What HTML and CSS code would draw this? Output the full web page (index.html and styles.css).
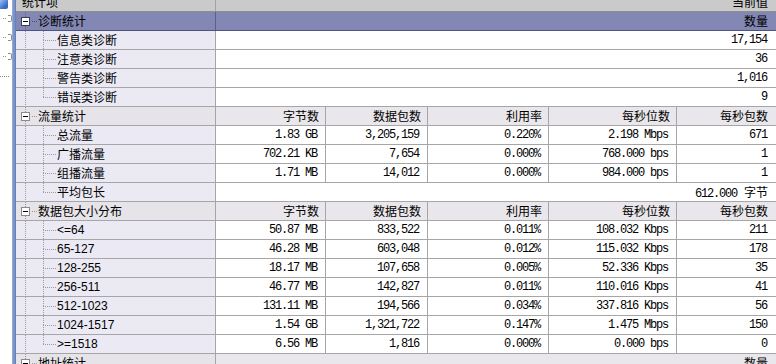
FILE: index.html
```html
<!DOCTYPE html>
<html lang="zh-CN">
<head>
<meta charset="utf-8">
<title>统计</title>
<link rel="stylesheet" href="styles.css">
</head>
<body>
<div class="app">
  <div class="side">
    <div class="side-icon"></div>
    <div class="side-node"><i class="dots"></i><b class="nub"></b></div>
    <div class="side-node"><i class="dots"></i><b class="nub"></b></div>
    <div class="side-node"><i class="dots"></i><b class="nub"></b></div>
    <div class="side-node"><i class="dots long"></i></div>
  </div>
  <div class="splitter"></div>
  <div class="grid">
    <div class="row head">
      <div class="c name"><span class="cut">统计项</span></div>
      <div class="c span"><span class="cut">当前值</span></div>
    </div>

    <div class="row group sel">
      <div class="c name"><b class="box"></b><i class="hz"></i><span class="lbl">诊断统计</span></div>
      <div class="c span">数量</div>
    </div>
    <div class="row child">
      <div class="c name"><span class="conn"><i class="up"></i><i class="h"></i><i class="dn"></i></span><span class="lbl">信息类诊断</span></div>
      <div class="c span num">17,154</div>
    </div>
    <div class="row child">
      <div class="c name"><span class="conn"><i class="up"></i><i class="h"></i><i class="dn"></i></span><span class="lbl">注意类诊断</span></div>
      <div class="c span num">36</div>
    </div>
    <div class="row child">
      <div class="c name"><span class="conn"><i class="up"></i><i class="h"></i><i class="dn"></i></span><span class="lbl">警告类诊断</span></div>
      <div class="c span num">1,016</div>
    </div>
    <div class="row child">
      <div class="c name"><span class="conn"><i class="up"></i><i class="h"></i><i class="dn end"></i></span><span class="lbl">错误类诊断</span></div>
      <div class="c span num">9</div>
    </div>

    <div class="row group">
      <div class="c name"><b class="box"></b><i class="hz"></i><span class="lbl">流量统计</span></div>
      <div class="c">字节数</div>
      <div class="c">数据包数</div>
      <div class="c">利用率</div>
      <div class="c">每秒位数</div>
      <div class="c">每秒包数</div>
    </div>
    <div class="row child">
      <div class="c name"><span class="conn"><i class="up"></i><i class="h"></i><i class="dn"></i></span><span class="lbl">总流量</span></div>
      <div class="c num">1.83 GB</div>
      <div class="c num">3,205,159</div>
      <div class="c num">0.220%</div>
      <div class="c num">2.198 Mbps</div>
      <div class="c num">671</div>
    </div>
    <div class="row child">
      <div class="c name"><span class="conn"><i class="up"></i><i class="h"></i><i class="dn"></i></span><span class="lbl">广播流量</span></div>
      <div class="c num">702.21 KB</div>
      <div class="c num">7,654</div>
      <div class="c num">0.000%</div>
      <div class="c num">768.000 bps</div>
      <div class="c num">1</div>
    </div>
    <div class="row child">
      <div class="c name"><span class="conn"><i class="up"></i><i class="h"></i><i class="dn"></i></span><span class="lbl">组播流量</span></div>
      <div class="c num">1.71 MB</div>
      <div class="c num">14,012</div>
      <div class="c num">0.000%</div>
      <div class="c num">984.000 bps</div>
      <div class="c num">1</div>
    </div>
    <div class="row child">
      <div class="c name"><span class="conn"><i class="up"></i><i class="h"></i><i class="dn end"></i></span><span class="lbl">平均包长</span></div>
      <div class="c span"><span class="mono">612.000 </span>字节</div>
    </div>

    <div class="row group">
      <div class="c name"><b class="box"></b><i class="hz"></i><span class="lbl">数据包大小分布</span></div>
      <div class="c">字节数</div>
      <div class="c">数据包数</div>
      <div class="c">利用率</div>
      <div class="c">每秒位数</div>
      <div class="c">每秒包数</div>
    </div>
    <div class="row child">
      <div class="c name"><span class="conn"><i class="up"></i><i class="h"></i><i class="dn"></i></span><span class="lbl sans">&lt;=64</span></div>
      <div class="c num">50.87 MB</div>
      <div class="c num">833,522</div>
      <div class="c num">0.011%</div>
      <div class="c num">108.032 Kbps</div>
      <div class="c num">211</div>
    </div>
    <div class="row child">
      <div class="c name"><span class="conn"><i class="up"></i><i class="h"></i><i class="dn"></i></span><span class="lbl sans">65-127</span></div>
      <div class="c num">46.28 MB</div>
      <div class="c num">603,048</div>
      <div class="c num">0.012%</div>
      <div class="c num">115.032 Kbps</div>
      <div class="c num">178</div>
    </div>
    <div class="row child">
      <div class="c name"><span class="conn"><i class="up"></i><i class="h"></i><i class="dn"></i></span><span class="lbl sans">128-255</span></div>
      <div class="c num">18.17 MB</div>
      <div class="c num">107,658</div>
      <div class="c num">0.005%</div>
      <div class="c num">52.336 Kbps</div>
      <div class="c num">35</div>
    </div>
    <div class="row child">
      <div class="c name"><span class="conn"><i class="up"></i><i class="h"></i><i class="dn"></i></span><span class="lbl sans">256-511</span></div>
      <div class="c num">46.77 MB</div>
      <div class="c num">142,827</div>
      <div class="c num">0.011%</div>
      <div class="c num">110.016 Kbps</div>
      <div class="c num">41</div>
    </div>
    <div class="row child">
      <div class="c name"><span class="conn"><i class="up"></i><i class="h"></i><i class="dn"></i></span><span class="lbl sans">512-1023</span></div>
      <div class="c num">131.11 MB</div>
      <div class="c num">194,566</div>
      <div class="c num">0.034%</div>
      <div class="c num">337.816 Kbps</div>
      <div class="c num">56</div>
    </div>
    <div class="row child">
      <div class="c name"><span class="conn"><i class="up"></i><i class="h"></i><i class="dn"></i></span><span class="lbl sans">1024-1517</span></div>
      <div class="c num">1.54 GB</div>
      <div class="c num">1,321,722</div>
      <div class="c num">0.147%</div>
      <div class="c num">1.475 Mbps</div>
      <div class="c num">150</div>
    </div>
    <div class="row child">
      <div class="c name"><span class="conn"><i class="up"></i><i class="h"></i><i class="dn end"></i></span><span class="lbl sans">&gt;=1518</span></div>
      <div class="c num">6.56 MB</div>
      <div class="c num">1,816</div>
      <div class="c num">0.000%</div>
      <div class="c num">0.000 bps</div>
      <div class="c num">0</div>
    </div>

    <div class="row group">
      <div class="c name"><b class="box"></b><i class="hz"></i><span class="lbl">地址统计</span></div>
      <div class="c span">数量</div>
    </div>
  </div>
</div>
</body>
</html>
```

FILE: styles.css
```css
html, body {
  margin: 0;
  padding: 0;
  background: #ffffff;
  overflow: hidden;
}

body {
  width: 776px;
  height: 364px;
  font-family: "Noto Sans CJK SC", "Noto Sans", sans-serif;
  font-size: 12px;
  color: #000;
}

.app {
  display: flex;
  height: 364px;
  overflow: hidden;
}

/* left tree strip */
.side {
  width: 12px;
  flex: none;
  background: #fff;
  display: flex;
  flex-direction: column;
  overflow: hidden;
}

.side-icon {
  width: 8px;
  height: 9px;
  background: linear-gradient(135deg, #9cc0f0 0%, #3f74cf 60%, #2d5bb0 100%);
  border-radius: 0 0 2px 0;
}

.side-node {
  height: 19px;
  display: flex;
  align-items: center;
}

.side-node .dots {
  width: 4px;
  height: 1px;
  margin-left: 3px;
  background: linear-gradient(90deg, #8c8c8c 1px, transparent 1px) 0 0 / 2px 1px repeat-x;
}

.side-node .dots.long {
  width: 9px;
  margin-left: 0;
  margin-top: 2px;
}

.side-node .nub {
  width: 4px;
  height: 7px;
  margin-left: 1px;
  box-sizing: border-box;
  border: 1px solid #8c8c8c;
  border-left: none;
  border-radius: 0 2px 2px 0;
}

.splitter {
  width: 4px;
  flex: none;
  background: linear-gradient(90deg, #a9bce2 0, #7e97cb 1px, #7890c6 3px, #5d73a8 4px);
}

/* grid */
.grid {
  flex: none;
  width: 760px;
  display: flex;
  flex-direction: column;
}

.row {
  display: grid;
  grid-template-columns: 200px 110px 102px 121px 128px 99px;
  height: 19px;
  box-sizing: border-box;
  border-bottom: 1px solid #a6a6a6;
  flex: none;
}

.c {
  box-sizing: border-box;
  border-right: 1px solid #a6a6a6;
  line-height: 18px;
  text-align: right;
  padding-right: 6px;
  white-space: nowrap;
  overflow: hidden;
}

.c:last-child {
  border-right: none;
  padding-right: 8px;
}

.c.span {
  grid-column: 2 / -1;
}

.num, .mono {
  font-family: "Liberation Mono", "DejaVu Sans Mono", monospace;
  font-size: 12px;
  letter-spacing: -1.2px;
}

.c.num {
  padding-right: 8px;
}

.c.num:last-child {
  padding-right: 9px;
}

.c.span .mono {
  margin-right: 1px;
}

/* header */
.row.head {
  height: 12px;
  background: #cacaca;
  border-bottom-color: #8e8e8e;
}

.row.head .c {
  border-right-color: #a3a3a3;
  height: 11px;
}

.row.head .cut {
  display: block;
  margin-top: -7px;
  line-height: 18px;
}

.row.head .name {
  text-align: left;
  padding-left: 6px;
}

/* name column */
.c.name {
  text-align: left;
  padding: 0;
  display: flex;
  align-items: center;
  background:
    linear-gradient(to bottom, #9b9b9b 1px, transparent 1px) 9px 0 / 1px 2px repeat-y,
    #ebeaf4;
}

.row.head .c.name {
  background: #cacaca;
  display: block;
}

/* groups */
.row.group {
  background: #e7e5ea;
}

.row.group .c {
  background-color: #e9e7eb;
}

.row.group .c.name {
  background:
    linear-gradient(to bottom, #9b9b9b 1px, transparent 1px) 9px 0 / 1px 2px repeat-y,
    #e6e4e9;
}

.row.group.sel {
  border-bottom-color: #4e5380;
}

.row.group.sel .c {
  background-color: #8287b4;
  border-right-color: #5a5f8c;
}

.row.group.sel .c.name {
  background:
    linear-gradient(to bottom, #5d6290 1px, transparent 1px) 9px 0 / 1px 2px repeat-y,
    #8287b4;
}

.box {
  width: 9px;
  height: 9px;
  margin-left: 5px;
  box-sizing: border-box;
  border: 1px solid #8a8a8a;
  background: #fff;
  display: flex;
  align-items: center;
  justify-content: center;
  flex: none;
}

.box::after {
  content: "";
  width: 5px;
  height: 1px;
  background: #000;
}

.row.group.sel .box {
  border-color: #3d3d5a;
}

.hz {
  width: 7px;
  height: 1px;
  margin-left: 1px;
  flex: none;
  background: linear-gradient(90deg, #9b9b9b 1px, transparent 1px) 1px 0 / 2px 1px repeat-x;
}

.row.group.sel .hz {
  background: linear-gradient(90deg, #4c5180 1px, transparent 1px) 1px 0 / 2px 1px repeat-x;
}

.lbl {
  margin-left: 0;
}

.lbl.sans {
  font-family: "Liberation Sans", Arial, sans-serif;
  font-size: 12px;
}

/* child connectors */
.conn {
  width: 14px;
  height: 18px;
  margin-left: 27px;
  display: flex;
  flex-direction: column;
  flex: none;
}

.conn .up {
  height: 9px;
  background: linear-gradient(to bottom, #9b9b9b 1px, transparent 1px) 0 0 / 1px 2px repeat-y;
}

.conn .h {
  height: 1px;
  background: linear-gradient(90deg, #9b9b9b 1px, transparent 1px) 0 0 / 2px 1px repeat-x;
}

.conn .dn {
  flex: 1;
  background: linear-gradient(to bottom, #9b9b9b 1px, transparent 1px) 0 1px / 1px 2px repeat-y;
}

.conn .dn.end {
  background: none;
}
```
